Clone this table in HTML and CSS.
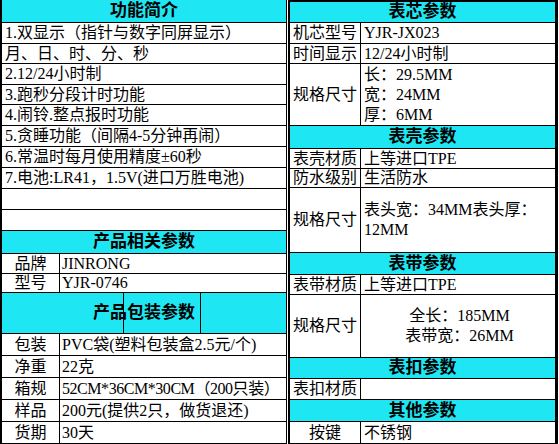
FILE: index.html
```html
<!DOCTYPE html>
<html lang="zh-CN">
<head>
<meta charset="utf-8">
<title>产品参数</title>
<link rel="stylesheet" href="styles.css">
</head>
<body>
<div class="page">
  <div class="sheet left">
    <div class="hd">功能简介</div>
    <div class="full">1.双显示（指针与数字同屏显示）</div>
    <div class="full">月、日、时、分、秒</div>
    <div class="full">2.12/24小时制</div>
    <div class="full">3.跑秒分段计时功能</div>
    <div class="full">4.闹铃.整点报时功能</div>
    <div class="full">5.贪睡功能（间隔4-5分钟再闹）</div>
    <div class="full">6.常温时每月使用精度±60秒</div>
    <div class="full">7.电池:LR41，1.5V(进口万胜电池)</div>
    <div class="full"></div>
    <div class="full"></div>
    <div class="hd">产品相关参数</div>
    <div class="lbl">品牌</div><div class="val">JINRONG</div>
    <div class="lbl">型号</div><div class="val">YJR-0746</div>
    <div class="hd pack">产品包装参数</div>
    <div class="lbl">包装</div><div class="val">PVC袋(塑料包装盒2.5元/个)</div>
    <div class="lbl">净重</div><div class="val">22克</div>
    <div class="lbl">箱规</div><div class="val tight">52CM*36CM*30CM（200只装）</div>
    <div class="lbl">样品</div><div class="val">200元(提供2只，做货退还)</div>
    <div class="lbl">货期</div><div class="val">30天</div>
  </div>
  <div class="sheet right">
    <div class="hd">表芯参数</div>
    <div class="lbl">机芯型号</div><div class="val">YJR-JX023</div>
    <div class="lbl">时间显示</div><div class="val">12/24小时制</div>
    <div class="lbl">规格尺寸</div>
    <div class="val multi"><span>长：29.5MM</span><span>宽：24MM</span><span>厚：6MM</span></div>
    <div class="hd">表壳参数</div>
    <div class="lbl">表壳材质</div><div class="val">上等进口TPE</div>
    <div class="lbl">防水级别</div><div class="val">生活防水</div>
    <div class="lbl">规格尺寸</div>
    <div class="val multi"><span>表头宽：34MM表头厚：</span><span>12MM</span></div>
    <div class="hd">表带参数</div>
    <div class="lbl">表带材质</div><div class="val">上等进口TPE</div>
    <div class="lbl">规格尺寸</div>
    <div class="val multi center"><span>全长：185MM</span><span>表带宽：26MM</span></div>
    <div class="hd">表扣参数</div>
    <div class="lbl">表扣材质</div><div class="val"></div>
    <div class="hd">其他参数</div>
    <div class="lbl">按键</div><div class="val">不锈钢</div>
  </div>
</div>
</body>
</html>
```
FILE: styles.css
```css
html, body {
  margin: 0;
  padding: 0;
  background: #ffffff;
}
body {
  font-family: "Liberation Serif", "Noto Sans CJK SC", serif;
  font-size: 16px;
  line-height: 20px;
  color: #000000;
}
.page {
  display: flex;
  align-items: flex-start;
  width: 559px;
  height: 444px;
}
.sheet {
  display: grid;
  gap: 1px;
  background: #000000;
  box-sizing: border-box;
}
.left {
  width: 287px;
  height: 444px;
  padding: 0 1px 1px 2px;
  grid-template-columns: 57px 1fr;
  grid-template-rows: 22px 20px 19px 20px 19px 20px 20px 20px 20px 20px 20px 22px 19px 18px 40px 21px 21px 21px 21px 21px;
}
.right {
  width: 270px;
  height: 444px;
  margin-left: 1px;
  padding: 2px 3px 1px 2px;
  grid-template-columns: 70px 1fr;
  grid-template-rows: 20px 20px 19px 61px 22px 19px 18px 64px 21px 19px 62px 20px 20px 21px 21px;
}
.sheet > div {
  background: #ffffff;
  display: flex;
  align-items: center;
  white-space: nowrap;
  overflow: hidden;
  min-width: 0;
}
.full {
  grid-column: 1 / -1;
  padding-left: 3px;
}
.hd {
  grid-column: 1 / -1;
  justify-content: center;
  font-weight: bold;
  font-size: 17px;
}
.sheet > .hd {
  background: #1ee6f2;
}
.lbl {
  justify-content: center;
}
.val {
  padding-left: 2px;
}
.tight {
  letter-spacing: -0.45px;
}
.right .val {
  padding-left: 3px;
}
.sheet > .multi {
  flex-direction: column;
  align-items: flex-start;
  justify-content: center;
}
.sheet > .multi.center {
  align-items: center;
}
.sheet > .pack {
  position: relative;
  overflow: visible;
}
.pack::before,
.pack::after {
  content: "";
  position: absolute;
  top: 0;
  bottom: 0;
  width: 1px;
  background: #000000;
}
.pack::before {
  left: 121px;
}
.pack::after {
  left: 198px;
}
```
